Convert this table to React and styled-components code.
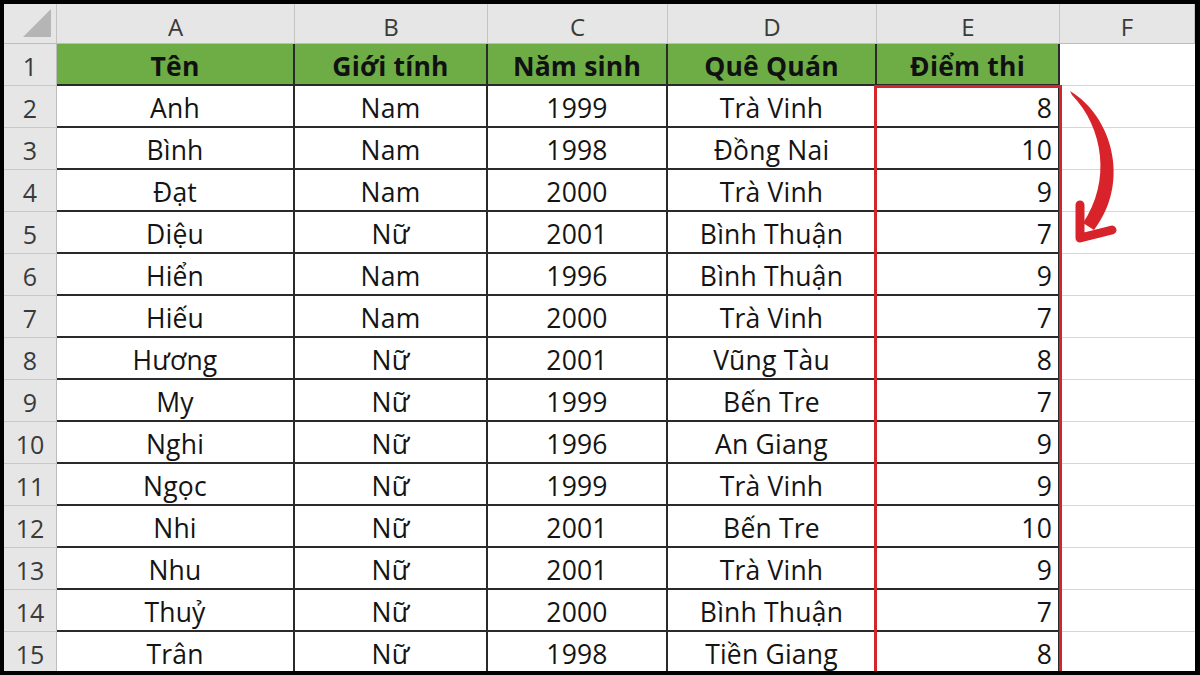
import React from 'react';
import styled, { createGlobalStyle } from 'styled-components';

const GlobalStyle = createGlobalStyle`
  html, body {
    margin: 0;
    padding: 0;
    background: #000;
  }
  body {
    font-family: "Open Sans", "Noto Sans", sans-serif;
  }
`;

const Frame = styled.div`
  position: relative;
  width: 1200px;
  height: 675px;
  box-sizing: border-box;
  padding: 4px 5px 4px 4px;
  background: #000;
  overflow: hidden;
`;

const Sheet = styled.div`
  position: relative;
  height: 100%;
  display: grid;
  grid-template-columns: 53px 238px 193px 180px 209px 183px 1fr;
  grid-template-rows: 40px;
  grid-auto-rows: 42px;
  background: #fff;
  overflow: hidden;
`;

const Cell = styled.div`
  box-sizing: border-box;
  display: flex;
  align-items: center;
  justify-content: ${(p) => (p.$right ? 'flex-end' : 'center')};
  padding: ${(p) => (p.$right ? '3px 6px 0 0' : '3px 0 0 0')};
  font-size: 26.5px;
  letter-spacing: 0.2px;
  color: #141414;
  white-space: nowrap;
  border-right: 2px solid #2a2a2a;
  border-bottom: 2px solid #2a2a2a;
`;

const ColHead = styled(Cell)`
  background: #e6e6e6;
  color: #3a3a3a;
  font-size: 24px;
  letter-spacing: 0;
  padding-top: 6px;
  border-right: 1px solid #c4c4c4;
  border-bottom: 1px solid #bdbdbd;
`;

const Corner = styled(ColHead)`
  justify-content: flex-end;
  align-items: flex-end;
  padding: 0 4px 5px 0;
  svg {
    display: block;
  }
`;

const RowHead = styled(Cell)`
  background: #e6e6e6;
  color: #3a3a3a;
  font-size: 25px;
  letter-spacing: 0;
  border-right: 1px solid #bdbdbd;
  border-bottom: 1px solid #c8c8c8;
`;

const TitleCell = styled(Cell)`
  background: #6eac46;
  font-weight: 700;
  color: #111;
`;

const EmptyCell = styled(Cell)`
  border-right: none;
  border-bottom: 1px solid #d6d6d6;
`;

const Highlight = styled.div`
  position: absolute;
  left: 870px;
  top: 81px;
  width: 188px;
  height: 600px;
  border: 3px solid #d2262d;
  box-sizing: border-box;
  pointer-events: none;
`;

const ArrowLayer = styled.svg`
  position: absolute;
  inset: 0;
  pointer-events: none;
`;

const COLS = ['A', 'B', 'C', 'D', 'E', 'F'];
const HEADERS = ['Tên', 'Giới tính', 'Năm sinh', 'Quê Quán', 'Điểm thi'];

const ROWS = [
  ['Anh', 'Nam', '1999', 'Trà Vinh', 8],
  ['Bình', 'Nam', '1998', 'Đồng Nai', 10],
  ['Đạt', 'Nam', '2000', 'Trà Vinh', 9],
  ['Diệu', 'Nữ', '2001', 'Bình Thuận', 7],
  ['Hiển', 'Nam', '1996', 'Bình Thuận', 9],
  ['Hiếu', 'Nam', '2000', 'Trà Vinh', 7],
  ['Hương', 'Nữ', '2001', 'Vũng Tàu', 8],
  ['My', 'Nữ', '1999', 'Bến Tre', 7],
  ['Nghi', 'Nữ', '1996', 'An Giang', 9],
  ['Ngọc', 'Nữ', '1999', 'Trà Vinh', 9],
  ['Nhi', 'Nữ', '2001', 'Bến Tre', 10],
  ['Nhu', 'Nữ', '2001', 'Trà Vinh', 9],
  ['Thuỷ', 'Nữ', '2000', 'Bình Thuận', 7],
  ['Trân', 'Nữ', '1998', 'Tiền Giang', 8],
];

const App = () => (
  <>
    <GlobalStyle />
    <Frame>
      <Sheet>
        <Corner>
          <svg width="29" height="29" viewBox="0 0 29 29">
            <polygon points="28,0 28,28 0,28" fill="#b5b5b5" />
          </svg>
        </Corner>
        {COLS.map((c) => (
          <ColHead key={c}>{c}</ColHead>
        ))}

        <RowHead>1</RowHead>
        {HEADERS.map((h) => (
          <TitleCell key={h}>{h}</TitleCell>
        ))}
        <EmptyCell />

        {ROWS.map((row, i) => (
          <React.Fragment key={i}>
            <RowHead>{i + 2}</RowHead>
            {row.map((v, j) => (
              <Cell key={j} $right={j === 4}>
                {v}
              </Cell>
            ))}
            <EmptyCell />
          </React.Fragment>
        ))}

        <Highlight />
      </Sheet>

      <ArrowLayer width="1200" height="675" viewBox="0 0 1200 675">
        <path
          d="M1070,91 C1112,116 1131,182 1094,230 L1083,223 C1111,182 1104,128 1072,95 Z"
          fill="#d9232a"
        />
        <path
          d="M1080,205 L1080,238 L1112,230"
          fill="none"
          stroke="#d9232a"
          strokeWidth="9"
          strokeLinecap="round"
          strokeLinejoin="round"
        />
      </ArrowLayer>
    </Frame>
  </>
);

export default App;
